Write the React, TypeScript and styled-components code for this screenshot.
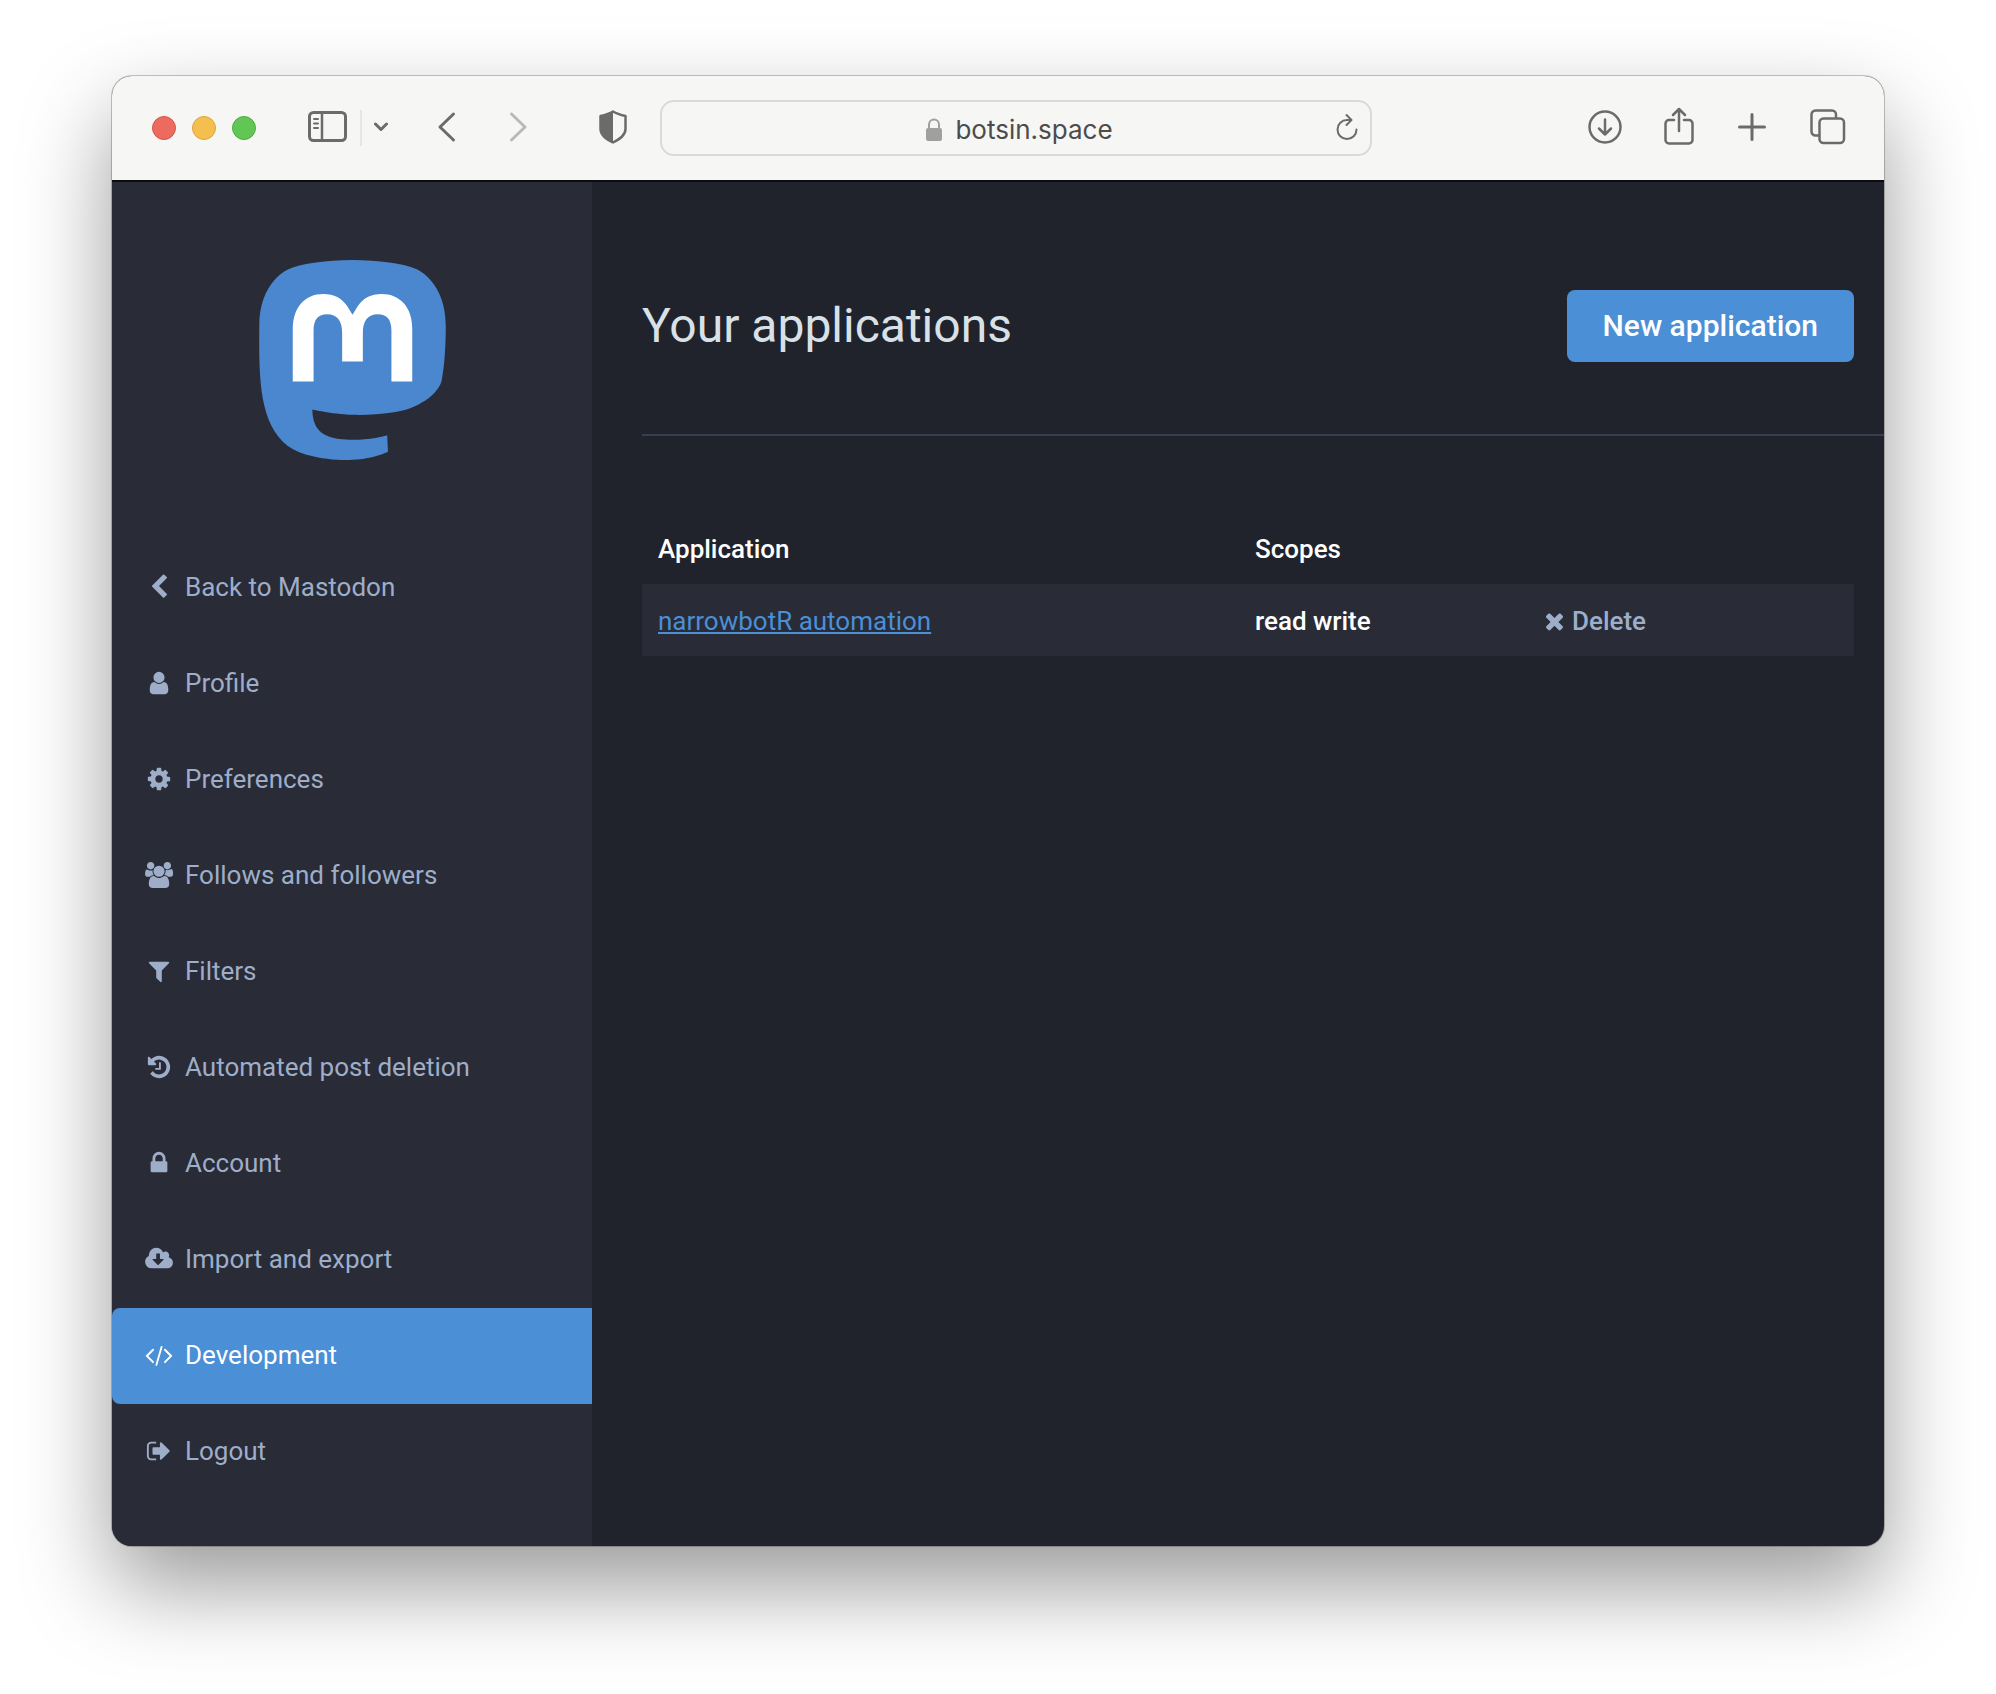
import React from "react";
import styled, { createGlobalStyle } from "styled-components";

const GlobalStyle = createGlobalStyle`
  *, *::before, *::after { box-sizing: border-box; }
  body {
    margin: 0;
    background: #ffffff;
    font-family: Roboto, "Liberation Sans", sans-serif;
    font-size: 26px;
    line-height: 36px;
    -webkit-font-smoothing: antialiased;
  }
`;

const Desktop = styled.div`
  padding: 76px 112px 148px;
`;

const BrowserWindow = styled.div`
  border-radius: 20px;
  overflow: hidden;
  background: #20232b;
  box-shadow:
    0 0 0 1px rgba(0, 0, 0, 0.22),
    0 40px 90px rgba(0, 0, 0, 0.4);
`;

const Toolbar = styled.header`
  display: flex;
  align-items: center;
  height: 104px;
  padding: 0 38px 0 40px;
  background: #f6f6f4;
  color: #6b6b69;
`;

const Lights = styled.div`
  display: flex;
  gap: 16px;
  margin-right: 52px;
`;

const Light = styled.button<{ $fill: string; $edge: string }>`
  width: 24px;
  height: 24px;
  padding: 0;
  border: 1px solid ${(p) => p.$edge};
  border-radius: 50%;
  background: ${(p) => p.$fill};
`;

const ToolButton = styled.button`
  display: flex;
  flex: none;
  padding: 0 0 2px;
  border: 0;
  background: none;
  color: inherit;

  &:disabled { color: #b9b9b8; }
  svg { display: block; }
`;

const SidebarTools = styled.div`
  display: flex;
  align-items: center;
  gap: 12px;
  margin-right: 49px;
`;

const Separator = styled.span`
  width: 2px;
  height: 36px;
  background: #e6e6e4;
`;

const HistoryTools = styled.div`
  display: flex;
  align-items: center;
  gap: 52px;
  margin-right: 70px;
`;

const AddressBar = styled.div`
  display: flex;
  align-items: center;
  justify-content: center;
  flex: 1;
  height: 56px;
  margin: 0 216px 0 33px;
  padding: 0 12px;
  border: 2px solid #dadad8;
  border-radius: 14px;
`;

const Address = styled.button`
  display: flex;
  flex: 1;
  align-items: center;
  justify-content: center;
  gap: 12px;
  padding: 4px 0 0 28px;
  border: 0;
  background: none;
  color: #4c4c4b;
  font-family: Inter, Roboto, sans-serif;
  font-size: 26px;
  line-height: 36px;

  svg { color: #a0a09e; }
`;

const PageTools = styled.div`
  display: flex;
  align-items: center;
  gap: 42px;
`;

const Page = styled.div`
  display: grid;
  grid-template-columns: 480px minmax(0, 1fr);
  box-shadow: inset 0 2px 0 #0b0c12;
`;

const Sidebar = styled.aside`
  padding: 80px 0 46px;
  background: #292b37;
  box-shadow: inset 0 2px 0 #0b0c12;
`;

const LogoLink = styled.a`
  display: flex;
  justify-content: center;
  margin-bottom: 80px;
`;

const NavList = styled.ul`
  margin: 0;
  padding: 0;
  list-style: none;
`;

const NavLink = styled.a<{ $active: boolean }>`
  display: flex;
  align-items: center;
  gap: 10px;
  height: 96px;
  padding: 0 30px 2px;
  border-radius: 8px 0 0 8px;
  background: ${(p) => (p.$active ? "#4b8fd6" : "transparent")};
  color: ${(p) => (p.$active ? "#ffffff" : "#9eaec9")};
  text-decoration: none;
`;

const IconBox = styled.span`
  display: flex;
  justify-content: center;
  width: 33px;
`;

const Content = styled.main`
  padding: 110px 0 0 50px;
`;

const Heading = styled.div`
  display: flex;
  align-items: center;
  justify-content: space-between;
  padding: 0 30px 72px 0;
  border-bottom: 2px solid #393e4f;
`;

const Title = styled.h1`
  margin: 0;
  color: #d9e1e8;
  font-size: 48px;
  font-weight: 400;
  line-height: 56px;
`;

const PrimaryButton = styled.button`
  height: 72px;
  padding: 0 36px;
  border: 0;
  border-radius: 8px;
  background: #4b8fd6;
  color: #ffffff;
  font-family: inherit;
  font-size: 30px;
  font-weight: 500;
  line-height: 36px;
`;

const TableWrap = styled.div`
  padding: 76px 30px 0 0;
`;

const Table = styled.table`
  width: 100%;
  border-collapse: collapse;
  table-layout: fixed;
  color: #ffffff;
`;

const Cell = styled.td`
  height: 72px;
  padding: 2px 16px 0;
  background: #292b37;
  font-weight: 500;
  text-align: left;
`;

const HeadCell = styled(Cell)`
  background: none;
`;

const AppLink = styled.a`
  color: #4b8fd6;
  font-weight: 400;
  text-decoration: underline;
`;

const DeleteLink = styled.a`
  display: flex;
  align-items: center;
  gap: 6px;
  color: #9eaec9;
  text-decoration: none;
`;

const Glyph = ({ path, x = 0, width = 1792 }: { path: string; x?: number; width?: number }) => (
  <svg
    width={Math.round((width / 1792) * 26)}
    height={26}
    viewBox={`${x} 0 ${width} 1792`}
    fill="currentColor"
    aria-hidden="true"
  >
    <path d={path} />
  </svg>
);

const TIMES =
  "M1490 1322q0 40-28 68l-136 136q-28 28-68 28t-68-28l-294-294-294 294q-28 28-68 28t-68-28l-136-136q-28-28-28-68t28-68l294-294-294-294q-28-28-28-68t28-68l136-136q28-28 68-28t68 28l294 294 294-294q28-28 68-28t68 28l136 136q28 28 28 68t-28 68l-294 294 294 294q28 28 28 68z";

const NAV = [
  {
    label: "Back to Mastodon",
    path: "M1427 301l-531 531 531 531q19 19 19 45t-19 45l-166 166q-19 19-45 19t-45-19l-742-742q-19-19-19-45t19-45l742-742q19-19 45-19t45 19l166 166q19 19 19 45t-19 45z",
  },
  {
    label: "Profile",
    path: "M1536 1399q0 109-62.5 187t-150.5 78h-854q-88 0-150.5-78t-62.5-187q0-85 8.5-160.5t31.5-152 58.5-131 94-89 134.5-34.5q131 128 313 128t313-128q76 0 134.5 34.5t94 89 58.5 131 31.5 152 8.5 160.5zm-256-887q0 159-112.5 271.5t-271.5 112.5-271.5-112.5-112.5-271.5 112.5-271.5 271.5-112.5 271.5 112.5 112.5 271.5z",
  },
  {
    label: "Preferences",
    path: "M1152 896q0-106-75-181t-181-75-181 75-75 181 75 181 181 75 181-75 75-181zm512-109v222q0 12-8 23t-20 13l-185 28q-19 54-39 91 35 50 107 138 10 12 10 25t-9 23q-27 37-99 108t-94 71q-12 0-26-9l-138-108q-44 23-91 38-16 136-29 186-7 28-36 28h-222q-14 0-24.5-8.5t-11.5-21.5l-28-184q-49-16-90-37l-141 107q-10 9-25 9-14 0-25-11-126-114-165-168-7-10-7-23 0-12 8-23 15-21 51-66.5t54-70.5q-27-50-41-99l-183-27q-13-2-21-12.5t-8-23.5v-222q0-12 8-23t19-13l186-28q14-46 39-92-40-57-107-138-10-12-10-24 0-10 9-23 26-36 98.5-107.5t94.5-71.5q13 0 26 10l138 107q44-23 91-38 16-136 29-186 7-28 36-28h222q14 0 24.5 8.5t11.5 21.5l28 184q49 16 90 37l142-107q9-9 24-9 13 0 25 10 129 119 165 170 7 8 7 22 0 12-8 23-15 21-51 66.5t-54 70.5q26 50 41 98l183 28q13 2 21 12.5t8 23.5z",
  },
  {
    label: "Follows and followers",
    width: 2048,
    path: "M657 896q-162 5-265 128h-134q-82 0-138-40.5t-56-118.5q0-353 124-353 6 0 43.5 21t97.5 42.5 119 21.5q67 0 133-23-5 37-5 66 0 159 93 293zm1071 637q0 120-73 189.5t-194 69.5h-874q-121 0-194-69.5t-73-189.5q0-53 3.5-103.5t14-109 26.5-108.5 43-97.5 62-81 85.5-53.5 111.5-20q10 0 43 21.5t73 48 107 48 135 21.5 135-21.5 107-48 73-48 43-21.5q61 0 111.5 20t85.5 53.5 62 81 43 97.5 26.5 108.5 14 109 3.5 103.5zm-1024-1277q0 106-75 181t-181 75-181-75-75-181 75-181 181-75 181 75 75 181zm704 384q0 159-112.5 271.5t-271.5 112.5-271.5-112.5-112.5-271.5 112.5-271.5 271.5-112.5 271.5 112.5 112.5 271.5zm576 225q0 78-56 118.5t-138 40.5h-134q-103-123-265-128 93-134 93-293 0-29-5-66 66 23 133 23 59 0 119-21.5t97.5-42.5 43.5-21q124 0 124 353zm-128-609q0 106-75 181t-181 75-181-75-75-181 75-181 181-75 181 75 75 181z",
  },
  {
    label: "Filters",
    path: "M1595 295q17 41-14 70l-493 493v742q0 42-39 59-13 5-25 5-27 0-45-19l-256-256q-19-19-19-45v-486l-493-493q-31-29-14-70 17-39 59-39h1280q42 0 59 39z",
  },
  {
    label: "Automated post deletion",
    path: "M1664 896q0 156-61 298t-164 245-245 164-298 61q-172 0-327-72.5t-264-204.5q-7-10-6.5-22.5t8.5-20.5l137-138q10-9 25-9 16 2 23 12 73 95 179 147t225 52q104 0 198.5-40.5t163.5-109.5 109.5-163.5 40.5-198.5-40.5-198.5-109.5-163.5-163.5-109.5-198.5-40.5q-98 0-188 35.5t-160 101.5l137 138q31 30 14 69-17 40-59 40h-448q-26 0-45-19t-19-45v-448q0-42 40-59 39-17 69 14l130 129q107-101 244.5-156.5t284.5-55.5q156 0 298 61t245 164 164 245 61 298zm-640-288v448q0 14-9 23t-23 9h-320q-14 0-23-9t-9-23v-64q0-14 9-23t23-9h224v-352q0-14 9-23t23-9h64q14 0 23 9t9 23z",
  },
  {
    label: "Account",
    path: "M640 768h512v-192q0-106-75-181t-181-75-181 75-75 181v192zm832 96v576q0 40-28 68t-68 28h-960q-40 0-68-28t-28-68v-576q0-40 28-68t68-28h32v-192q0-184 132-316t316-132 316 132 132 316v192h32q40 0 68 28t28 68z",
  },
  {
    label: "Import and export",
    x: -64,
    width: 1920,
    path: "M1216 928q0-14-9-23t-23-9h-224v-352q0-13-9.5-22.5t-22.5-9.5h-192q-13 0-22.5 9.5t-9.5 22.5v352h-224q-13 0-22.5 9.5t-9.5 22.5q0 14 9 23l352 352q9 9 23 9t23-9l351-351q10-12 10-24zm640 224q0 159-112.5 271.5t-271.5 112.5h-1088q-185 0-316.5-131.5t-131.5-316.5q0-130 70-240t188-165q-2-30-2-43 0-212 150-362t362-150q156 0 285.5 87t188.5 231q71-62 166-62 106 0 181 75t75 181q0 76-41 138 130 31 213.5 135.5t83.5 238.5z",
  },
  {
    label: "Development",
    active: true,
    width: 1920,
    path: "M617 1399l-50 50q-10 10-23 10t-23-10l-466-466q-10-10-10-23t10-23l466-466q10-10 23-10t23 10l50 50q10 10 10 23t-10 23l-393 393 393 393q10 10 10 23t-10 23zm591-1067l-373 1291q-4 13-15.5 19.5t-23.5 2.5l-62-17q-13-4-19.5-15.5t-2.5-24.5l373-1291q4-13 15.5-19.5t23.5-2.5l62 17q13 4 19.5 15.5t2.5 24.5zm657 651l-466 466q-10 10-23 10t-23-10l-50-50q-10-10-10-23t10-23l393-393-393-393q-10-10-10-23t10-23l50-50q10-10 23-10t23 10l466 466q10 10 10 23t-10 23z",
  },
  {
    label: "Logout",
    path: "M704 1440q0 4 1 20t.5 26.5-3 23.5-10 19.5-20.5 6.5h-320q-119 0-203.5-84.5t-84.5-203.5v-704q0-119 84.5-203.5t203.5-84.5h320q13 0 22.5 9.5t9.5 22.5q0 4 1 20t.5 26.5-3 23.5-10 19.5-20.5 6.5h-320q-66 0-113 47t-47 113v704q0 66 47 113t113 47h312l11.5 1 11.5 3 8 5.5 7 9 2 13.5zm928-544q0 26-19 45l-544 544q-19 19-45 19t-45-19-19-45v-288h-448q-26 0-45-19t-19-45v-384q0-26 19-45t45-19h448v-288q0-26 19-45t45-19 45 19l544 544q19 19 19 45z",
  },
];

const MastodonLogo = () => (
  <svg width="187" height="200" viewBox="0 0 216.4144 232.00976" role="img" aria-label="Mastodon">
    <path
      fill="#4a87ce"
      d="M211.80734 139.0875c-3.18125 16.36625-28.4925 34.2775-57.5625 37.74875-15.15875 1.80875-30.08375 3.47125-45.99875 2.74125-26.0275-1.1925-46.565-6.2125-46.565-6.2125 0 2.53375.15625 4.94625.46875 7.2025 3.38375 25.68625 25.47 27.225 46.39125 27.9425 21.11625.7225 39.91875-5.20625 39.91875-5.20625l.8675 19.09s-14.77 7.93125-41.08125 9.39c-14.50875.7975-32.52375-.365-53.50625-5.91875C9.23234 213.82 1.40609 165.31125.20859 116.09125c-.365-14.61375-.14-28.39375-.14-39.91875 0-50.33 32.97625-65.0825 32.97625-65.0825C49.67234 3.45375 78.20359.2425 107.86484 0h.72875c29.66125.2425 58.21125 3.45375 74.8375 11.09 0 0 32.975 14.7525 32.975 65.0825 0 0 .41375 37.13375-4.59875 62.915"
    />
    <path
      fill="#ffffff"
      d="M177.50984 80.077v60.94125h-24.14375v-59.15c0-12.46875-5.24625-18.7975-15.74-18.7975-11.6025 0-17.4175 7.5075-17.4175 22.3525v32.37625H96.20734V85.42325c0-14.845-5.81625-22.3525-17.41875-22.3525-10.49375 0-15.74 6.32875-15.74 18.7975v59.15H38.90484V80.077c0-12.455 3.17125-22.3525 9.54125-29.675 6.56875-7.3225 15.17125-11.07625 25.85-11.07625 12.355 0 21.71125 4.74875 27.8975 14.2475l6.01375 10.08125 6.015-10.08125c6.185-9.49875 15.54125-14.2475 27.8975-14.2475 10.6775 0 19.28 3.75375 25.85 11.07625 6.36875 7.3225 9.54 17.22 9.54 29.675"
    />
  </svg>
);

const Line = ({
  width,
  height,
  stroke = 3,
  children,
}: {
  width: number;
  height: number;
  stroke?: number;
  children: React.ReactNode;
}) => (
  <svg
    width={width}
    height={height}
    viewBox={`0 0 ${width} ${height}`}
    fill="none"
    stroke="currentColor"
    strokeWidth={stroke}
    strokeLinecap="round"
    strokeLinejoin="round"
    aria-hidden="true"
  >
    {children}
  </svg>
);

const BrowserToolbar = () => (
  <Toolbar>
    <Lights>
      <Light $fill="#ec6a5e" $edge="#d5564b" aria-label="Close" />
      <Light $fill="#f5bf4f" $edge="#dba63c" aria-label="Minimise" />
      <Light $fill="#61c654" $edge="#4eac40" aria-label="Zoom" />
    </Lights>
    <SidebarTools>
      <ToolButton aria-label="Show sidebar">
        <Line width={40} height={34}>
          <rect x="1.5" y="2.5" width="36" height="28" rx="4" />
          <path d="M14 3v27" strokeWidth="2.5" />
          <path d="M6 9h4M6 13.500h4M6 18h4" strokeWidth="2" />
        </Line>
      </ToolButton>
      <Separator />
      <ToolButton aria-label="Tab groups">
        <Line width={14} height={10}>
          <path d="M1.500 2l5.500 5.500 5.500-5.500" />
        </Line>
      </ToolButton>
    </SidebarTools>
    <HistoryTools>
      <ToolButton aria-label="Back">
        <Line width={20} height={32}>
          <path d="M16.500 3L3 16l13.500 13" />
        </Line>
      </ToolButton>
      <ToolButton aria-label="Forward" disabled>
        <Line width={20} height={32}>
          <path d="M2.500 3L16 16 2.500 29" />
        </Line>
      </ToolButton>
    </HistoryTools>
    <ToolButton aria-label="Privacy report">
      <Line width={28} height={34}>
        <path d="M14 1.500c4 2.500 8 3.500 12.500 4.500v13c0 6-5 9.500-12.500 13.500C6.500 28.500 1.500 25 1.500 19V6C6 5 10 4 14 1.500z" strokeWidth="2.5" />
        <path d="M14 1.500v31C6.500 28.500 1.500 25 1.500 19V6C6 5 10 4 14 1.500z" fill="currentColor" stroke="none" />
      </Line>
    </ToolButton>
    <AddressBar>
      <Address>
        <svg width="18" height="26" viewBox="0 0 18 26" aria-hidden="true">
          <rect x="1" y="11" width="16" height="13" rx="2" fill="currentColor" />
          <path d="M4 12V7.500a5 5 0 0 1 10 0V12" fill="none" stroke="currentColor" strokeWidth="2" />
        </svg>
        botsin.space
      </Address>
      <ToolButton aria-label="Reload">
        <Line width={22} height={28} stroke={2}>
          <path d="M20.500 16.500a9.500 9.500 0 1 1-9.500-9.500h4" />
          <path d="M10.500 2l5 5-5 5" />
        </Line>
      </ToolButton>
    </AddressBar>
    <PageTools>
      <ToolButton aria-label="Downloads">
        <Line width={34} height={34}>
          <circle cx="17" cy="17" r="15.500" strokeWidth="2.5" />
          <path d="M17 9.500v15M11 18.500l6 6 6-6" strokeWidth="2.5" />
        </Line>
      </ToolButton>
      <ToolButton aria-label="Share">
        <Line width={32} height={40}>
          <path d="M10 13H5a3.500 3.500 0 0 0-3.500 3.500V33A3.500 3.500 0 0 0 5 36.500h20a3.500 3.500 0 0 0 3.500-3.500V16.500A3.500 3.500 0 0 0 25 13h-5" strokeWidth="2.5" />
          <path d="M15 24V2M9 8l6-6 6 6" strokeWidth="2.5" />
        </Line>
      </ToolButton>
      <ToolButton aria-label="New tab">
        <Line width={30} height={28}>
          <path d="M14 1.500v25M1.500 14h25" />
        </Line>
      </ToolButton>
      <ToolButton aria-label="Tab overview">
        <Line width={36} height={36}>
          <rect x="9.500" y="9.500" width="24.500" height="24.500" rx="4" strokeWidth="2.5" />
          <path d="M8.500 26.500H5.500a4 4 0 0 1-4-4V5.500a4 4 0 0 1 4-4H22a4 4 0 0 1 4 4v3" strokeWidth="2.5" />
        </Line>
      </ToolButton>
    </PageTools>
  </Toolbar>
);

export default function App() {
  return (
    <>
      <GlobalStyle />
      <Desktop>
        <BrowserWindow>
          <BrowserToolbar />
          <Page>
            <Sidebar>
              <LogoLink href="#home">
                <MastodonLogo />
              </LogoLink>
              <nav>
                <NavList>
                  {NAV.map((item) => (
                    <li key={item.label}>
                      <NavLink href="#nav" $active={!!item.active} aria-current={item.active ? "page" : undefined}>
                        <IconBox>
                          <Glyph path={item.path} x={item.x} width={item.width} />
                        </IconBox>
                        {item.label}
                      </NavLink>
                    </li>
                  ))}
                </NavList>
              </nav>
            </Sidebar>
            <Content>
              <Heading>
                <Title>Your applications</Title>
                <PrimaryButton>New application</PrimaryButton>
              </Heading>
              <TableWrap>
                <Table>
                  <colgroup>
                    <col />
                    <col width="288" />
                    <col width="327" />
                  </colgroup>
                  <thead>
                    <tr>
                      <HeadCell as="th" scope="col">Application</HeadCell>
                      <HeadCell as="th" scope="col">Scopes</HeadCell>
                      <HeadCell />
                    </tr>
                  </thead>
                  <tbody>
                    <tr>
                      <Cell>
                        <AppLink href="#application">narrowbotR automation</AppLink>
                      </Cell>
                      <Cell>read write</Cell>
                      <Cell>
                        <DeleteLink href="#delete">
                          <Glyph path={TIMES} x={96} width={1600} />
                          Delete
                        </DeleteLink>
                      </Cell>
                    </tr>
                  </tbody>
                </Table>
              </TableWrap>
            </Content>
          </Page>
        </BrowserWindow>
      </Desktop>
    </>
  );
}
